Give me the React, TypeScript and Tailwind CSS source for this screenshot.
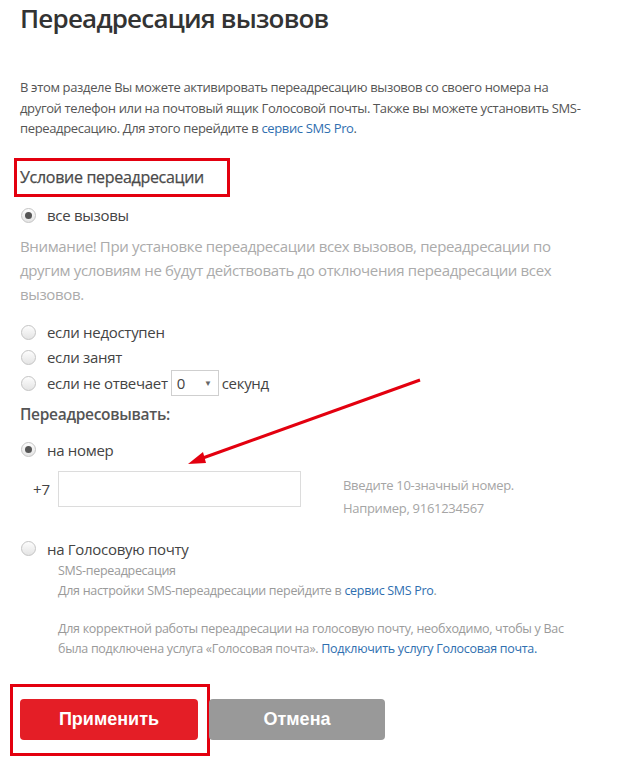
import React from "react";

function Radio({ checked = false }: { checked?: boolean }) {
  return (
    <span className="flex h-[15px] w-[15px] shrink-0 items-center justify-center rounded-full border border-[#c4c4c4] bg-gradient-to-b from-[#fdfdfd] to-[#e4e4e4]">
      {checked && <span className="h-[7px] w-[7px] rounded-full bg-[#555]" />}
    </span>
  );
}

export default function App() {
  return (
    <div className="relative h-[767px] w-[624px] overflow-hidden bg-white font-['Open_Sans',sans-serif] text-[#555]">
      <div className="pl-5 pr-4">
        <h1 className="pt-px text-[26px] font-semibold leading-[34px] tracking-[-0.8px] text-[#333]">
          Переадресация вызовов
        </h1>

        <p className="mt-[42px] text-[13px] leading-[20.5px] tracking-[-0.35px] text-[#555]">
          В этом разделе Вы можете активировать переадресацию вызовов со своего номера на
          <br />
          другой телефон или на почтовый ящик Голосовой почты. Также вы можете установить SMS-
          <br />
          переадресацию. Для этого перейдите в{" "}
          <a className="text-[#2f6fb0]">сервис SMS Pro</a>.
        </p>

        <div className="-ml-[6px] mt-[19px] flex h-[39px] w-[216px] items-center border-[3px] border-[#e3000f] pl-[3px]">
          <h2 className="text-[16px] tracking-[-0.3px] text-[#4a4a4a] [-webkit-text-stroke:0.25px_#4a4a4a]">
            Условие переадресации
          </h2>
        </div>

        <label className="mt-[7px] flex h-[24px] items-center gap-[11px] pl-[1px] text-[15px] tracking-[-0.3px] text-[#444]">
          <Radio checked />
          все вызовы
        </label>

        <p className="mt-[6px] w-[560px] text-[15px] leading-[24px] tracking-[-0.35px] text-[#ababab]">
          Внимание! При установке переадресации всех вызовов, переадресации по другим условиям
          не будут действовать до отключения переадресации всех вызовов.
        </p>

        <div className="mt-[14px] flex flex-col">
          <label className="flex h-[25px] items-center gap-[11px] pl-[1px] text-[15px] tracking-[-0.3px] text-[#444]">
            <Radio />
            если недоступен
          </label>
          <label className="flex h-[25px] items-center gap-[11px] pl-[1px] text-[15px] tracking-[-0.3px] text-[#444]">
            <Radio />
            если занят
          </label>
          <label className="flex h-[27px] items-center gap-[11px] pl-[1px] text-[15px] tracking-[-0.3px] text-[#444]">
            <Radio />
            <span className="flex items-center gap-[3px]">
              если не отвечает
              <span className="flex h-[26px] w-[48px] items-center justify-between border border-[#cfcfcf] pl-[5px] pr-[6px]">
                <span>0</span>
                <span className="text-[8px] text-[#666]">▼</span>
              </span>
              секунд
            </span>
          </label>
        </div>

        <h3 className="mt-[6px] text-[15.5px] font-semibold tracking-[-0.3px] text-[#555]">
          Переадресовывать:
        </h3>

        <label className="mt-[12px] flex h-[24px] items-center gap-[11px] pl-[1px] text-[15px] tracking-[-0.3px] text-[#444]">
          <Radio checked />
          на номер
        </label>

        <div className="mt-[9px] flex items-start">
          <span className="mt-[7px] w-[38px] pl-[13px] text-[15px] text-[#444]">+7</span>
          <div className="h-[36px] w-[243px] border border-[#dcdcdc]" />
          <div className="ml-[42px] mt-[3px] text-[13px] leading-[23px] tracking-[-0.3px] text-[#a5a5a5]">
            <div>Введите 10-значный номер.</div>
            <div>Например, 9161234567</div>
          </div>
        </div>

        <label className="mt-[17px] flex h-[24px] items-center gap-[11px] pl-[1px] text-[15px] tracking-[-0.3px] text-[#444]">
          <Radio />
          на Голосовую почту
        </label>

        <div className="pl-[38px] text-[12.5px] leading-[20.5px] tracking-[-0.3px] text-[#9a9a9a]">
          <div>SMS-переадресация</div>
          <div>
            Для настройки SMS-переадресации перейдите в{" "}
            <a className="text-[#2f6fb0]">сервис SMS Pro</a>.
          </div>
          <p className="mt-[17px]">
            Для корректной работы переадресации на голосовую почту, необходимо, чтобы у Вас
            <br />
            была подключена услуга «Голосовая почта».{" "}
            <a className="text-[#2f6fb0]">Подключить услугу Голосовая почта.</a>
          </p>
        </div>

        <div className="mt-[24px] flex items-center">
          <div className="-ml-[10px] flex h-[72px] w-[200px] items-center border-[3px] border-[#e3000f] pl-[7px]">
            <button className="h-[41px] w-[178px] rounded-[4px] bg-[#e41e26] font-['Liberation_Sans',sans-serif] text-[18px] font-bold text-white">
              Применить
            </button>
          </div>
          <button className="-ml-[1px] h-[41px] w-[176px] rounded-[4px] bg-[#999] font-['Liberation_Sans',sans-serif] text-[18px] font-bold text-white">
            Отмена
          </button>
        </div>
      </div>

      <svg className="pointer-events-none absolute left-0 top-0" width="624" height="767">
        <line x1="420" y1="380" x2="200" y2="459" stroke="#e3000f" strokeWidth="3" />
        <polygon points="188,464 203,452 206,463" fill="#e3000f" />
      </svg>
    </div>
  );
}
